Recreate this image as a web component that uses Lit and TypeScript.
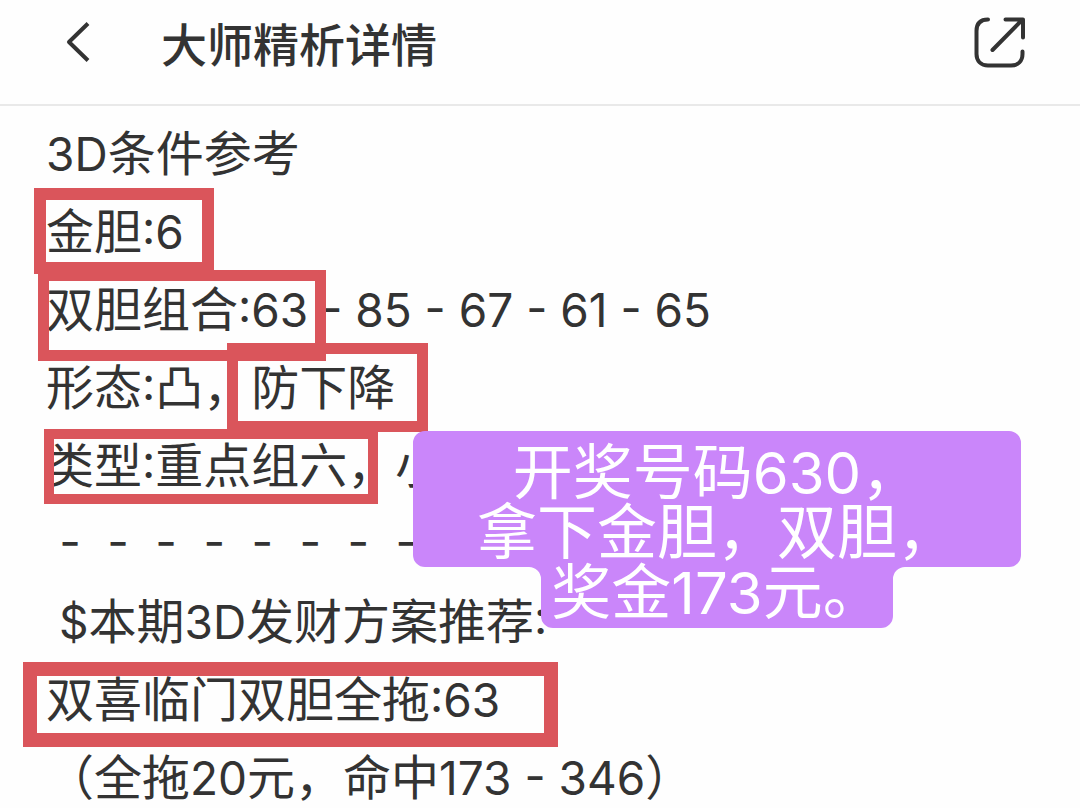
import { LitElement, html, css } from "lit";
import { customElement } from "lit/decorators.js";

const latin = (text: string) => html`<span class="latin">${text}</span>`;

@customElement("app-header")
class AppHeader extends LitElement {
  static styles = css`
    :host {
      display: block;
    }
    header {
      display: flex;
      align-items: center;
      height: 106px;
      box-sizing: border-box;
      padding: 0 52px 20px 64px;
      border-bottom: 2px solid #e9e9e9;
    }
    button {
      display: block;
      padding: 0;
      border: 0;
      background: none;
      color: #333;
      line-height: 0;
    }
    svg {
      fill: none;
      stroke: currentColor;
      stroke-width: 4;
      stroke-linecap: round;
      stroke-linejoin: round;
    }
    h1 {
      flex: 1;
      margin: 0 0 0 69px;
      font-size: 46px;
      font-weight: 500;
      line-height: 60px;
    }
  `;

  render() {
    return html`
      <header>
        <button aria-label="返回">
          <svg width="28" height="44" viewBox="0 0 28 44">
            <path d="M24 3.500 5 22l19 18.500" stroke-linecap="butt" />
          </svg>
        </button>
        <h1>大师精析详情</h1>
        <button aria-label="分享">
          <svg width="56" height="54" viewBox="0 0 56 54">
            <path d="M16 4.500C8.500 4.500 4.500 8.500 4.500 16V39c0 7 4.500 11.500 11.500 11.500h23c7 0 11.500-4.500 11.500-11.500v-2.500M20.500 35 49.500 5.500M33.500 4.500h17.500v18" />
          </svg>
        </button>
      </header>
    `;
  }
}

@customElement("result-bubble")
class ResultBubble extends LitElement {
  static styles = css`
    :host {
      display: block;
      position: relative;
      width: 608px;
      height: 197px;
      color: #fff;
    }
    svg {
      position: absolute;
      inset: 0;
      fill: #ca86fa;
    }
    p {
      position: relative;
      margin: 0;
      padding-top: 7px;
      font-size: 60px;
      line-height: 60px;
      text-align: center;
      white-space: nowrap;
    }
    .latin {
      font-family: Inter, "Noto Sans CJK SC", sans-serif;
      font-size: 58px;
      line-height: 0;
    }
  `;

  render() {
    return html`
      <svg width="608" height="197" viewBox="0 0 608 197" aria-hidden="true">
        <path d="M12 0H596a12 12 0 0 1 12 12V124a12 12 0 0 1-12 12H492a12 12 0 0 0-12 12V185a12 12 0 0 1-12 12H140a12 12 0 0 1-12-12V148a12 12 0 0 0-12-12H12a12 12 0 0 1-12-12V12A12 12 0 0 1 12 0Z" />
      </svg>
      <p>开奖号码${latin("630")}，<br />拿下金胆，双胆，<br />奖金${latin("173")}元。</p>
    `;
  }
}

@customElement("app-root")
class AppRoot extends LitElement {
  static styles = css`
    :host {
      display: block;
      min-height: 100vh;
      background: #fefefe;
      color: #333;
      font-family: "Noto Sans CJK SC", sans-serif;
    }
    main {
      position: relative;
      display: grid;
      gap: 18px;
      padding: 14px 46px 0;
    }
    p {
      margin: 0;
      font-size: 48px;
      line-height: 60px;
      white-space: pre;
    }
    .latin {
      font-family: Inter, "Noto Sans CJK SC", sans-serif;
      font-size: 46px;
      font-feature-settings: "case";
      line-height: 0;
    }
    .rule .latin {
      font-size: 47px;
    }
    .mark {
      position: absolute;
      box-sizing: border-box;
      border: 11px solid #da555b;
    }
    .gold {
      left: 34px;
      top: 82px;
      width: 180px;
      height: 86px;
      border-width: 12px;
    }
    .pair {
      left: 38px;
      top: 164px;
      width: 288px;
      height: 91px;
    }
    .shape {
      left: 227px;
      top: 237px;
      width: 201px;
      height: 89px;
    }
    .type {
      left: 44px;
      top: 323px;
      width: 334px;
      height: 75px;
      border-width: 10px;
    }
    .plan {
      left: 23px;
      top: 556px;
      width: 535px;
      height: 85px;
      border-width: 14px;
    }
    result-bubble {
      position: absolute;
      left: 413px;
      top: 325px;
    }
  `;

  render() {
    const dashes = " " + Array(8).fill("-").join("  ");
    return html`
      <app-header></app-header>
      <main>
        <p>${latin("3D")}条件参考</p>
        <p>金胆${latin(":6")}</p>
        <p>双胆组合${latin(":63 - 85 - 67 - 61 - 65")}</p>
        <p>形态${latin(":")}凸，防下降</p>
        <p>类型${latin(":")}重点组六，小</p>
        <p class="rule">${latin(dashes)}</p>
        <p>${latin(" $")}本期${latin("3D")}发财方案推荐${latin(":")}</p>
        <p>双喜临门双胆全拖${latin(":63")}</p>
        <p>（全拖${latin("20")}元，命中${latin("173 - 346")}）</p>
        <div class="mark gold"></div>
        <div class="mark pair"></div>
        <div class="mark shape"></div>
        <div class="mark type"></div>
        <div class="mark plan"></div>
        <result-bubble></result-bubble>
      </main>
    `;
  }
}
